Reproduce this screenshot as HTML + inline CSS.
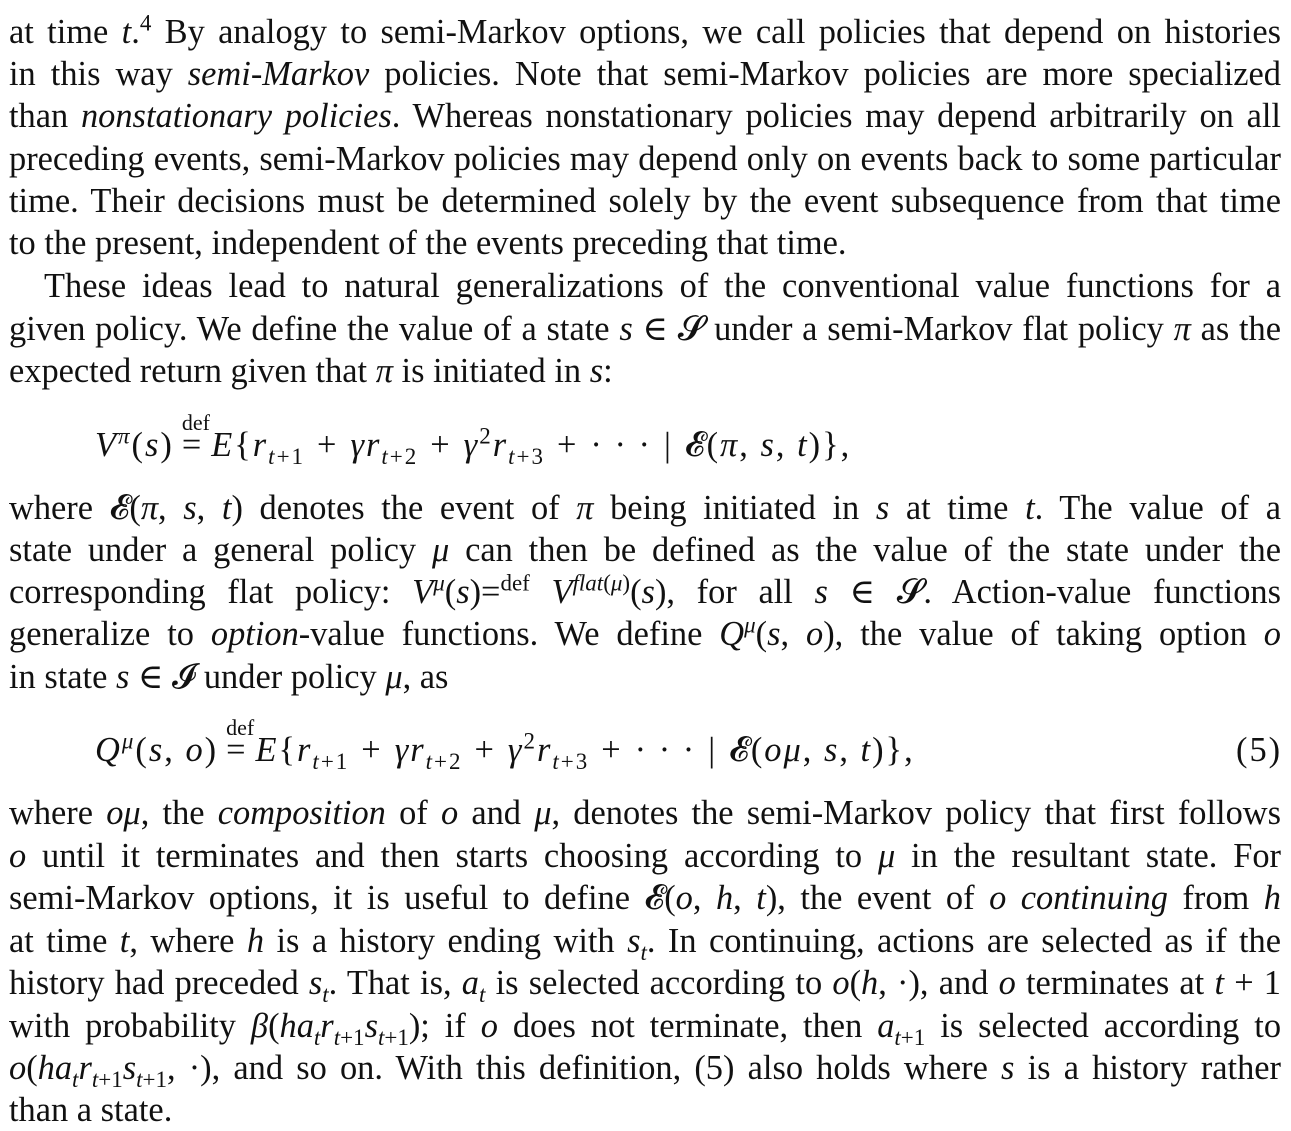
<!DOCTYPE html>
<html><head><meta charset="utf-8"><style>
html,body{margin:0;padding:0;background:#fff;}
body{width:1291px;height:1127px;position:relative;overflow:hidden;font-family:"Liberation Serif","DejaVu Serif",serif;color:#111;font-size:34.4px;}
.l{position:absolute;left:9px;width:1272px;height:42px;line-height:42px;white-space:nowrap;text-align:justify;text-align-last:justify;}
.n{text-align:left;text-align-last:left;}
i{font-style:italic;}
sub,sup{font-size:23px;line-height:0;}
.eq{position:absolute;line-height:42px;white-space:nowrap;letter-spacing:2px;}
.o{padding:0 12px;}
.df{position:relative;padding:0 8px;}
.df span{position:absolute;top:-24px;left:8px;font-size:22px;letter-spacing:0;}
</style></head><body>
<div class="l" style="top:11px">at time <i>t</i>.<sup>4</sup> By analogy to semi-Markov options, we call policies that depend on histories</div>
<div class="l" style="top:53px">in this way <i>semi-Markov</i> policies. Note that semi-Markov policies are more specialized</div>
<div class="l" style="top:95px">than <i>nonstationary policies</i>. Whereas nonstationary policies may depend arbitrarily on all</div>
<div class="l" style="top:138px">preceding events, semi-Markov policies may depend only on events back to some particular</div>
<div class="l" style="top:180px">time. Their decisions must be determined solely by the event subsequence from that time</div>
<div class="l n" style="top:222px">to the present, independent of the events preceding that time.</div>
<div class="l" style="top:265px;left:44px;width:1237px">These ideas lead to natural generalizations of the conventional value functions for a</div>
<div class="l" style="top:308px">given policy. We define the value of a state <i>s</i> ∈ 𝓢 under a semi-Markov flat policy <i>π</i> as the</div>
<div class="l n" style="top:350px">expected return given that <i>π</i> is initiated in <i>s</i>:</div>
<div class="eq" style="top:424px;left:95px"><i>V</i><sup><i>π</i></sup>(<i>s</i>)<span class="df"><span>def</span>=</span><i>E</i>{<i>r</i><sub><i>t</i>+1</sub><span class="o">+</span><i>γr</i><sub><i>t</i>+2</sub><span class="o">+</span><i>γ</i><sup>2</sup><i>r</i><sub><i>t</i>+3</sub><span class="o">+</span>· · ·<span class="o">|</span>𝓔(<i>π</i>, <i>s</i>, <i>t</i>)},</div>
<div class="l" style="top:487px">where 𝓔(<i>π</i>, <i>s</i>, <i>t</i>) denotes the event of <i>π</i> being initiated in <i>s</i> at time <i>t</i>. The value of a</div>
<div class="l" style="top:529px">state under a general policy <i>μ</i> can then be defined as the value of the state under the</div>
<div class="l" style="top:571px">corresponding flat policy: <i>V</i><sup><i>μ</i></sup>(<i>s</i>)=<sup>def</sup> <i>V</i><sup><i>flat</i>(<i>μ</i>)</sup>(<i>s</i>), for all <i>s</i> ∈ 𝓢. Action-value functions</div>
<div class="l" style="top:613px">generalize to <i>option</i>-value functions. We define <i>Q</i><sup><i>μ</i></sup>(<i>s</i>, <i>o</i>), the value of taking option <i>o</i></div>
<div class="l n" style="top:656px">in state <i>s</i> ∈ 𝓘 under policy <i>μ</i>, as</div>
<div class="eq" style="top:729px;left:95px"><i>Q</i><sup><i>μ</i></sup>(<i>s</i>, <i>o</i>)<span class="df"><span>def</span>=</span><i>E</i>{<i>r</i><sub><i>t</i>+1</sub><span class="o">+</span><i>γr</i><sub><i>t</i>+2</sub><span class="o">+</span><i>γ</i><sup>2</sup><i>r</i><sub><i>t</i>+3</sub><span class="o">+</span>· · ·<span class="o">|</span>𝓔(<i>oμ</i>, <i>s</i>, <i>t</i>)},</div>
<div class="eq" style="top:729px;left:1236px">(5)</div>
<div class="l" style="top:792px">where <i>oμ</i>, the <i>composition</i> of <i>o</i> and <i>μ</i>, denotes the semi-Markov policy that first follows</div>
<div class="l" style="top:835px"><i>o</i> until it terminates and then starts choosing according to <i>μ</i> in the resultant state. For</div>
<div class="l" style="top:877px">semi-Markov options, it is useful to define 𝓔(<i>o</i>, <i>h</i>, <i>t</i>), the event of <i>o</i> <i>continuing</i> from <i>h</i></div>
<div class="l" style="top:920px">at time <i>t</i>, where <i>h</i> is a history ending with <i>s<sub>t</sub></i>. In continuing, actions are selected as if the</div>
<div class="l" style="top:962px">history had preceded <i>s<sub>t</sub></i>. That is, <i>a<sub>t</sub></i> is selected according to <i>o</i>(<i>h</i>, ·), and <i>o</i> terminates at <i>t</i> + 1</div>
<div class="l" style="top:1005px">with probability <i>β</i>(<i>ha<sub>t</sub>r</i><sub><i>t</i>+1</sub><i>s</i><sub><i>t</i>+1</sub>); if <i>o</i> does not terminate, then <i>a</i><sub><i>t</i>+1</sub> is selected according to</div>
<div class="l" style="top:1047px"><i>o</i>(<i>ha<sub>t</sub>r</i><sub><i>t</i>+1</sub><i>s</i><sub><i>t</i>+1</sub>, ·), and so on. With this definition, (5) also holds where <i>s</i> is a history rather</div>
<div class="l n" style="top:1089px">than a state.</div>
</body></html>
